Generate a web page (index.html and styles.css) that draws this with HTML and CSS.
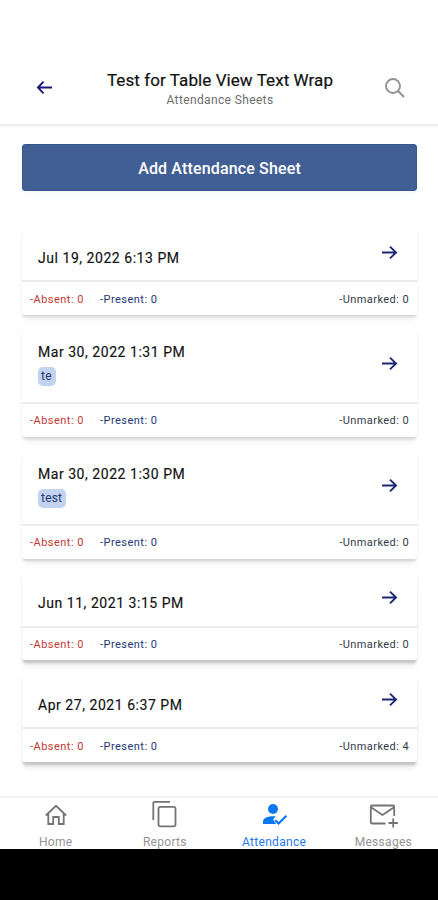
FILE: index.html
```html
<!DOCTYPE html>
<html lang="en">
<head>
<meta charset="utf-8">
<title>Attendance Sheets</title>
<link rel="stylesheet" href="styles.css">
</head>
<body>
<svg class="defs" width="0" height="0">
  <symbol id="arrow" viewBox="0 0 18 16"><path d="M1 8H16M9.5 1.7L16 8L9.5 14.3"/></symbol>
</svg>
<div class="screen">
  <header class="header">
    <svg class="back" viewBox="0 0 18 16"><path d="M17 8H2M8 1.8L2 8L8 14.2"/></svg>
    <div class="titles">
      <h1 class="title">Test for Table View Text Wrap</h1>
      <p class="subtitle">Attendance Sheets</p>
    </div>
    <svg class="search" viewBox="0 0 20 20"><circle cx="8" cy="8" r="7"/><path d="M13 13L19 19"/></svg>
  </header>
  <main class="content">
    <button class="add">Add Attendance Sheet</button>
    <section class="cards">
      <article class="card">
        <div class="top"><div class="date">Jul 19, 2022 6:13 PM</div><svg class="arrow"><use href="#arrow"/></svg></div>
        <div class="counts"><span class="absent">-Absent: 0</span><span class="present">-Present: 0</span><span class="unmarked">-Unmarked: 0</span></div>
      </article>
      <article class="card tagged">
        <div class="top"><div><div class="date">Mar 30, 2022 1:31 PM</div><span class="tag">te</span></div><svg class="arrow"><use href="#arrow"/></svg></div>
        <div class="counts"><span class="absent">-Absent: 0</span><span class="present">-Present: 0</span><span class="unmarked">-Unmarked: 0</span></div>
      </article>
      <article class="card tagged">
        <div class="top"><div><div class="date">Mar 30, 2022 1:30 PM</div><span class="tag">test</span></div><svg class="arrow"><use href="#arrow"/></svg></div>
        <div class="counts"><span class="absent">-Absent: 0</span><span class="present">-Present: 0</span><span class="unmarked">-Unmarked: 0</span></div>
      </article>
      <article class="card raised">
        <div class="top"><div class="date">Jun 11, 2021 3:15 PM</div><svg class="arrow"><use href="#arrow"/></svg></div>
        <div class="counts"><span class="absent">-Absent: 0</span><span class="present">-Present: 0</span><span class="unmarked">-Unmarked: 0</span></div>
      </article>
      <article class="card raised">
        <div class="top"><div class="date">Apr 27, 2021 6:37 PM</div><svg class="arrow"><use href="#arrow"/></svg></div>
        <div class="counts"><span class="absent">-Absent: 0</span><span class="present">-Present: 0</span><span class="unmarked">-Unmarked: 4</span></div>
      </article>
    </section>
  </main>
  <nav class="tabs">
    <a class="tab"><svg class="icon" viewBox="0 0 28 32"><path d="M3.8 16.5L14 6.8L24.2 16.5M6.3 14.5V25H11.2V18H16.8V25H21.7V14.5"/></svg><span>Home</span></a>
    <a class="tab"><svg class="icon" viewBox="0 0 28 32"><path d="M2.3 21V4.3Q2.3 2.8 3.8 2.8H19"/><rect x="7.5" y="7.8" width="17" height="19.5" rx="1.8"/></svg><span>Reports</span></a>
    <a class="tab active"><svg class="icon" viewBox="0 0 28 32"><circle class="fill" cx="13" cy="10" r="5"/><path class="fill" d="M3 25V22.5C3 19 8 17.3 13.5 17.3C14.4 17.3 15 17.4 15.6 17.5L13.2 20.5L16 25Z"/><path d="M15.2 21.2L18.6 24.5L26.4 16.7"/></svg><span>Attendance</span></a>
    <a class="tab"><svg class="icon" viewBox="0 0 28 32"><path d="M16.5 24.5H3Q1.8 24.5 1.8 23.3V8Q1.8 6.5 3 6.5H24Q25.2 6.5 25.2 8V17M2.3 8.5L13.5 16L24.7 8.5M24.2 19.5V28.5M19.5 24H28.9"/></svg><span>Messages</span></a>
  </nav>
  <div class="system"></div>
</div>
</body>
</html>
```
FILE: styles.css
```css
* { box-sizing: border-box; }
body { margin: 0; background: #fff; font-family: Roboto, "Liberation Sans", sans-serif; }
.defs { display: block; }
svg { fill: none; overflow: visible; flex: none; }
.screen { height: 900px; display: flex; flex-direction: column; overflow: hidden; }

.header {
  height: 126px; flex: none; padding: 51px 33px 0 36px;
  display: flex; align-items: center; justify-content: space-between;
  border-bottom: 2px solid #ededed; box-shadow: 0 1px 2px #f6f6f6;
}
.back { width: 17px; height: 15px; stroke: #1c1679; stroke-width: 2; }
.search { width: 20px; height: 20px; stroke: #929292; stroke-width: 1.9; }
.titles { text-align: center; padding: 2px 0 0 2px; }
.title { margin: 0; font-size: 17px; line-height: 22px; font-weight: 400; color: #111; letter-spacing: .08px; -webkit-text-stroke: .2px #111; }
.subtitle { margin: 0; font-size: 12px; line-height: 18px; color: #6d6d6d; letter-spacing: .37px; }

.content { flex: 1; min-height: 0; padding: 18px 21px 0 22px; }
.add {
  display: block; width: 100%; height: 47px; padding: 2px 0 0; border: 1px solid #34588c; border-radius: 3px;
  background: #425f95; color: #fff; font: 500 16px/20px Roboto, sans-serif; letter-spacing: .15px;
  box-shadow: 0 2px 6px #f3f6fa;
}
.cards { margin-top: 33px; display: flex; flex-direction: column; gap: 11px; }
.card { height: 90.5px; background: #fff; border-radius: 3px; box-shadow: 0 3px 3px -1px #d2d2d2, 0 7px 6px -2px #f3f3f3; }
.card.tagged { height: 111px; }
.card.raised { box-shadow: 0 4px 3px -1px #c2c2c2, 0 8px 6px -2px #ededed; }
.top { height: 58px; padding: 0 19px 0 16px; display: flex; align-items: center; justify-content: space-between; border-bottom: 2px solid #ebebeb; }
.tagged .top { height: 78px; }
.date { font-size: 14px; line-height: 20px; color: #111; letter-spacing: .54px; padding-top: 11px; height: 31px; -webkit-text-stroke: .15px #111; }
.tagged .date { padding: 0; height: 20px; }
.tag { display: block; width: fit-content; margin-top: 5px; margin-bottom: -1px; padding: 0 4px 0 3px; border-radius: 5px; background: #c3d2ef; color: #243a73; font-size: 12px; line-height: 19px; letter-spacing: .2px; }
.arrow { width: 17px; height: 15px; stroke: #1b2774; stroke-width: 2; }
.counts { height: 32px; padding: 3px 8px 0 8px; display: flex; align-items: center; font-size: 11px; line-height: 14px; letter-spacing: .48px; }
.absent { color: #c33831; }
.present { color: #243875; margin-left: 16px; }
.unmarked { color: #333b44; margin-left: auto; letter-spacing: .42px; }

.tabs { position: relative; height: 53px; flex: none; display: grid; grid-template-columns: repeat(4, 1fr); border-top: 2px solid #f3f3f3; background: #fff; padding: 1px 0 0 1px; }
.tab { display: flex; flex-direction: column; align-items: center; color: #929292; font-size: 12px; line-height: 16px; letter-spacing: .3px; }
.icon { width: 28px; height: 32px; stroke: #747474; stroke-width: 1.8; }
.tab span { margin-top: 3px; }
.active { color: #2678ed; }
.active .icon { stroke: #0878f5; stroke-width: 2.2; }
.fill { fill: #0878f5; stroke: none; }
.system { position: relative; height: 51px; flex: none; background: #000; }
```
